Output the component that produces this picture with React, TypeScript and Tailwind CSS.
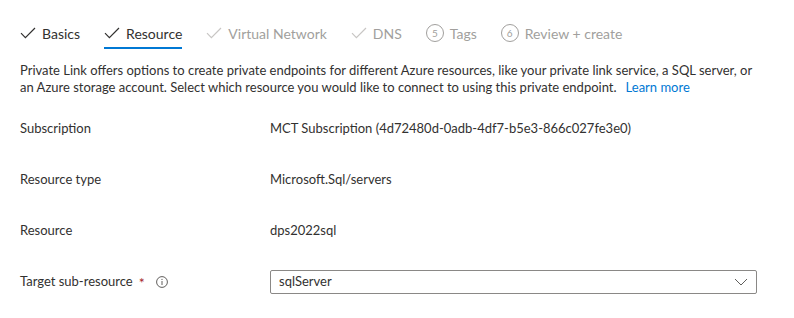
import React from "react";

const font = { fontFamily: '"Lato", "Segoe UI", "Open Sans", sans-serif' };

function Check({ disabled }: { disabled?: boolean }) {
  return (
    <svg width="16" height="12" viewBox="0 0 16 12" fill="none" className="shrink-0">
      <path
        d="M1 6.2 L5.4 10.6 L15 1"
        stroke={disabled ? "#c8c6c4" : "#323130"}
        strokeWidth="1.2"
      />
    </svg>
  );
}

function StepNum({ n }: { n: number }) {
  return (
    <span className="flex h-[18px] w-[18px] shrink-0 items-center justify-center rounded-full border border-[#a19f9d] text-[10px] leading-none text-[#a19f9d]">
      {n}
    </span>
  );
}

type Tab = { label: string; done?: boolean; active?: boolean; disabled?: boolean; num?: number };

const tabs: Tab[] = [
  { label: "Basics", done: true },
  { label: "Resource", done: true, active: true },
  { label: "Virtual Network", done: true, disabled: true },
  { label: "DNS", done: true, disabled: true },
  { label: "Tags", num: 5, disabled: true },
  { label: "Review + create", num: 6, disabled: true },
];

function Row({ label, children }: { label: React.ReactNode; children: React.ReactNode }) {
  return (
    <div className="flex h-[24px] items-center text-[13px] text-[#323130]">
      <div className="flex w-[250px] shrink-0 items-center">{label}</div>
      <div className="flex flex-1 items-center">{children}</div>
    </div>
  );
}

export default function App() {
  return (
    <div className="h-[318px] w-[794px] overflow-hidden bg-white pl-[20px] text-[#323130]" style={font}>
      {/* Wizard tabs */}
      <div className="flex pt-[19px]">
        {tabs.map((t) => (
          <div
            key={t.label}
            className={`mr-[24px] flex h-[30px] items-center gap-[6px] border-b-2 text-[14px] ${
              t.active ? "border-[#0078d4]" : "border-transparent"
            } ${t.disabled ? "text-[#a19f9d]" : "text-[#323130]"}`}
          >
            {t.done ? <Check disabled={t.disabled} /> : <StepNum n={t.num ?? 0} />}
            <span>{t.label}</span>
          </div>
        ))}
      </div>

      {/* Description */}
      <p className="mt-[13px] text-[13px] leading-[17px] text-[#323130]">
        Private Link offers options to create private endpoints for different Azure resources, like your private link service, a SQL server, or
        <br />
        an Azure storage account. Select which resource you would like to connect to using this private endpoint.
        <a className="ml-[9px] text-[#0078d4]">Learn more</a>
      </p>

      {/* Fields */}
      <div className="mt-[21px] flex flex-col gap-[27px] pr-[37px]">
        <Row label="Subscription">MCT Subscription (4d72480d-0adb-4df7-b5e3-866c027fe3e0)</Row>
        <Row label="Resource type">Microsoft.Sql/servers</Row>
        <Row label="Resource">dps2022sql</Row>
        <Row
          label={
            <>
              <span>Target sub-resource</span>
              <span className="ml-[6px] text-[14px] text-[#a4262c]">*</span>
              <svg width="12" height="12" viewBox="0 0 12 12" className="ml-[11px]" fill="none">
                <circle cx="6" cy="6" r="5.4" stroke="#605e5c" strokeWidth="1" />
                <path d="M6 5 V9" stroke="#605e5c" strokeWidth="1" />
                <circle cx="6" cy="3.4" r="0.6" fill="#605e5c" />
              </svg>
            </>
          }
        >
          <div className="flex h-[24px] w-full items-center justify-between rounded-[2px] border border-[#8a8886] pl-[8px] pr-[8px]">
            <span>sqlServer</span>
            <svg width="14" height="8" viewBox="0 0 14 8" fill="none">
              <path d="M1 1 L7 7 L13 1" stroke="#605e5c" strokeWidth="1" />
            </svg>
          </div>
        </Row>
      </div>
    </div>
  );
}
